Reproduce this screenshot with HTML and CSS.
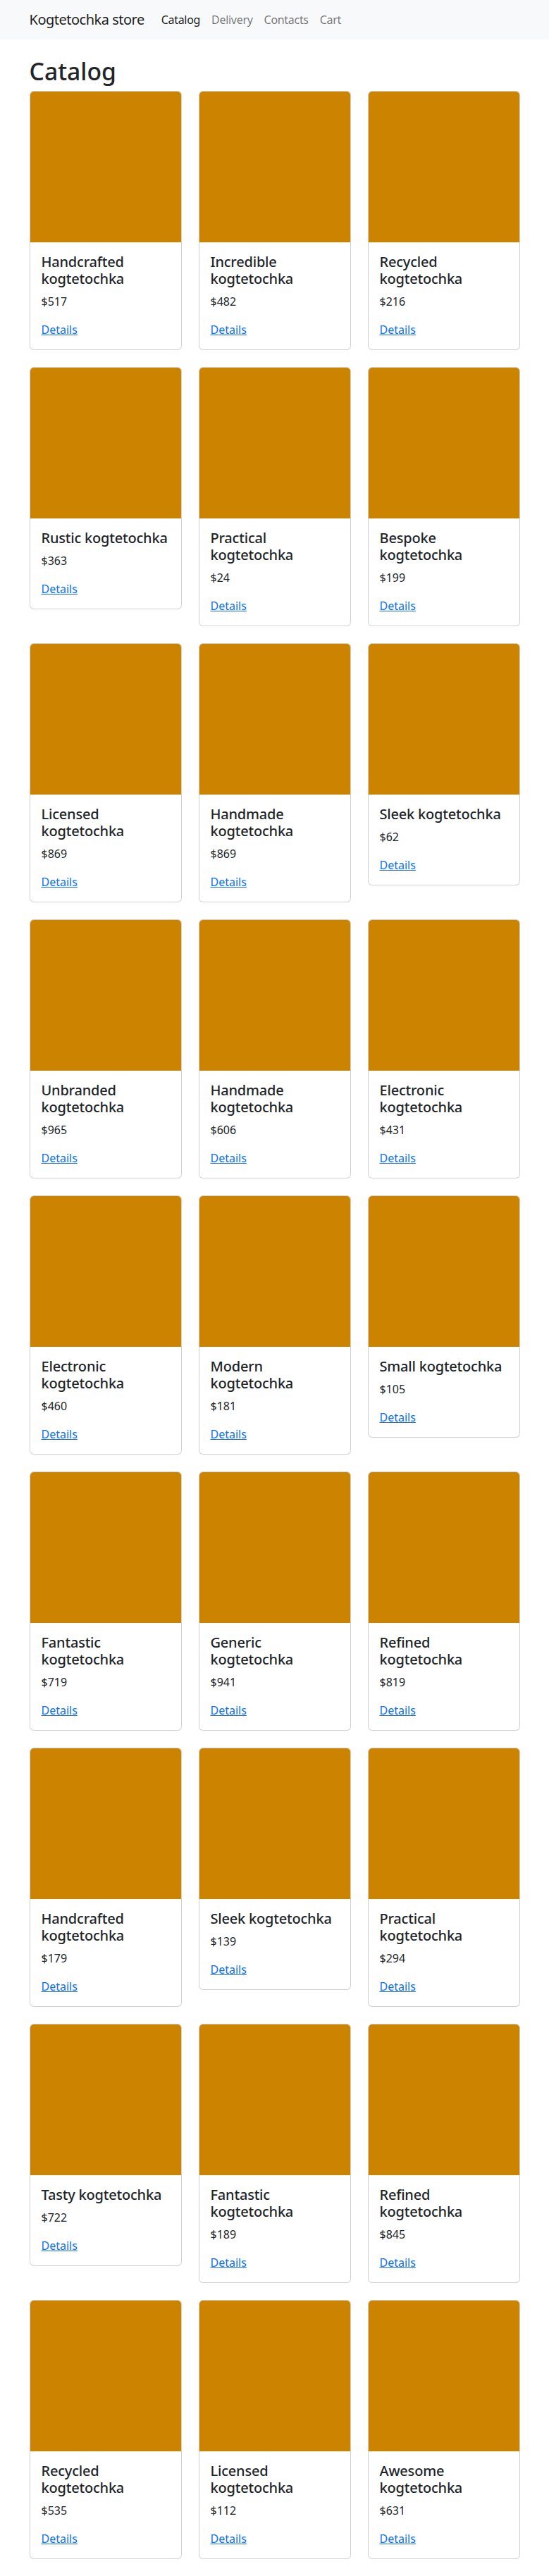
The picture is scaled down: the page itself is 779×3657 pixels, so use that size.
FILE: index.html
```html
<!DOCTYPE html>
<html lang="en">
<head>
<meta charset="utf-8">
<title>Kogtetochka store</title>
<link rel="stylesheet" href="styles.css">
</head>
<body>
<nav class="navbar">
  <div class="container nav-inner">
    <a class="brand" href="#">Kogtetochka store</a>
    <ul class="nav-links">
      <li><a class="nav-link active" href="#">Catalog</a></li>
      <li><a class="nav-link" href="#">Delivery</a></li>
      <li><a class="nav-link" href="#">Contacts</a></li>
      <li><a class="nav-link" href="#">Cart</a></li>
    </ul>
  </div>
</nav>
<main class="container page">
  <h1 class="page-title">Catalog</h1>
  <div class="grid">
    <div class="card"><div class="card-img"></div><div class="card-body"><h5 class="card-title">Handcrafted kogtetochka</h5><p class="card-text">$517</p><a href="#">Details</a></div></div>
    <div class="card"><div class="card-img"></div><div class="card-body"><h5 class="card-title">Incredible kogtetochka</h5><p class="card-text">$482</p><a href="#">Details</a></div></div>
    <div class="card"><div class="card-img"></div><div class="card-body"><h5 class="card-title">Recycled kogtetochka</h5><p class="card-text">$216</p><a href="#">Details</a></div></div>

    <div class="card"><div class="card-img"></div><div class="card-body"><h5 class="card-title">Rustic kogtetochka</h5><p class="card-text">$363</p><a href="#">Details</a></div></div>
    <div class="card"><div class="card-img"></div><div class="card-body"><h5 class="card-title">Practical kogtetochka</h5><p class="card-text">$24</p><a href="#">Details</a></div></div>
    <div class="card"><div class="card-img"></div><div class="card-body"><h5 class="card-title">Bespoke kogtetochka</h5><p class="card-text">$199</p><a href="#">Details</a></div></div>

    <div class="card"><div class="card-img"></div><div class="card-body"><h5 class="card-title">Licensed kogtetochka</h5><p class="card-text">$869</p><a href="#">Details</a></div></div>
    <div class="card"><div class="card-img"></div><div class="card-body"><h5 class="card-title">Handmade kogtetochka</h5><p class="card-text">$869</p><a href="#">Details</a></div></div>
    <div class="card"><div class="card-img"></div><div class="card-body"><h5 class="card-title">Sleek kogtetochka</h5><p class="card-text">$62</p><a href="#">Details</a></div></div>

    <div class="card"><div class="card-img"></div><div class="card-body"><h5 class="card-title">Unbranded kogtetochka</h5><p class="card-text">$965</p><a href="#">Details</a></div></div>
    <div class="card"><div class="card-img"></div><div class="card-body"><h5 class="card-title">Handmade kogtetochka</h5><p class="card-text">$606</p><a href="#">Details</a></div></div>
    <div class="card"><div class="card-img"></div><div class="card-body"><h5 class="card-title">Electronic kogtetochka</h5><p class="card-text">$431</p><a href="#">Details</a></div></div>

    <div class="card"><div class="card-img"></div><div class="card-body"><h5 class="card-title">Electronic kogtetochka</h5><p class="card-text">$460</p><a href="#">Details</a></div></div>
    <div class="card"><div class="card-img"></div><div class="card-body"><h5 class="card-title">Modern kogtetochka</h5><p class="card-text">$181</p><a href="#">Details</a></div></div>
    <div class="card"><div class="card-img"></div><div class="card-body"><h5 class="card-title">Small kogtetochka</h5><p class="card-text">$105</p><a href="#">Details</a></div></div>

    <div class="card"><div class="card-img"></div><div class="card-body"><h5 class="card-title">Fantastic kogtetochka</h5><p class="card-text">$719</p><a href="#">Details</a></div></div>
    <div class="card"><div class="card-img"></div><div class="card-body"><h5 class="card-title">Generic kogtetochka</h5><p class="card-text">$941</p><a href="#">Details</a></div></div>
    <div class="card"><div class="card-img"></div><div class="card-body"><h5 class="card-title">Refined kogtetochka</h5><p class="card-text">$819</p><a href="#">Details</a></div></div>

    <div class="card"><div class="card-img"></div><div class="card-body"><h5 class="card-title">Handcrafted kogtetochka</h5><p class="card-text">$179</p><a href="#">Details</a></div></div>
    <div class="card"><div class="card-img"></div><div class="card-body"><h5 class="card-title">Sleek kogtetochka</h5><p class="card-text">$139</p><a href="#">Details</a></div></div>
    <div class="card"><div class="card-img"></div><div class="card-body"><h5 class="card-title">Practical kogtetochka</h5><p class="card-text">$294</p><a href="#">Details</a></div></div>

    <div class="card"><div class="card-img"></div><div class="card-body"><h5 class="card-title">Tasty kogtetochka</h5><p class="card-text">$722</p><a href="#">Details</a></div></div>
    <div class="card"><div class="card-img"></div><div class="card-body"><h5 class="card-title">Fantastic kogtetochka</h5><p class="card-text">$189</p><a href="#">Details</a></div></div>
    <div class="card"><div class="card-img"></div><div class="card-body"><h5 class="card-title">Refined kogtetochka</h5><p class="card-text">$845</p><a href="#">Details</a></div></div>

    <div class="card"><div class="card-img"></div><div class="card-body"><h5 class="card-title">Recycled kogtetochka</h5><p class="card-text">$535</p><a href="#">Details</a></div></div>
    <div class="card"><div class="card-img"></div><div class="card-body"><h5 class="card-title">Licensed kogtetochka</h5><p class="card-text">$112</p><a href="#">Details</a></div></div>
    <div class="card"><div class="card-img"></div><div class="card-body"><h5 class="card-title">Awesome kogtetochka</h5><p class="card-text">$631</p><a href="#">Details</a></div></div>
  </div>
</main>
</body>
</html>
```
FILE: styles.css
```css
* { box-sizing: border-box; }

html, body { margin: 0; padding: 0; }

body {
  font-family: "Segoe UI", "Noto Sans", "Open Sans", "Liberation Sans", sans-serif;
  font-size: 16px;
  line-height: 1.5;
  color: #212529;
  background: #fff;
}

.container {
  width: 100%;
  max-width: 720px;
  margin: 0 auto;
  padding: 0 12px;
}

.navbar {
  background: #f8f9fa;
  padding: 8px 0;
}

.nav-inner {
  display: flex;
  align-items: center;
}

.brand {
  font-size: 20px;
  line-height: 30px;
  padding: 5px 0;
  margin-right: 16px;
  color: rgba(0, 0, 0, 0.9);
  text-decoration: none;
  white-space: nowrap;
  letter-spacing: -0.5px;
}

.nav-links {
  display: flex;
  list-style: none;
  margin: 0;
  padding: 0;
}

.nav-link {
  display: block;
  padding: 8px;
  line-height: 24px;
  color: rgba(0, 0, 0, 0.55);
  text-decoration: none;
  letter-spacing: -0.3px;
}

.nav-link.active { color: rgba(0, 0, 0, 0.9); }

.page {
  padding-top: 25px;
  padding-bottom: 24px;
}

.page-title {
  margin: 0 0 8px;
  font-size: 33.7px;
  font-weight: 500;
  line-height: 1.2;
}

.grid {
  display: grid;
  grid-template-columns: repeat(3, 1fr);
  column-gap: 24px;
  row-gap: 24px;
  align-items: start;
}

.card {
  border: 1px solid rgba(0, 0, 0, 0.175);
  border-radius: 6px;
  overflow: hidden;
  background: #fff;
}

.card-img {
  aspect-ratio: 1 / 1;
  background: #cc8400;
}

.card-body { padding: 16px; }

.card-title {
  margin: 0 0 8px;
  font-size: 20px;
  font-weight: 500;
  line-height: 1.2;
  letter-spacing: -0.2px;
}

.card-text { margin: 0 0 16px; }

.card-body a {
  color: #0d6efd;
  text-decoration: underline;
}
```
